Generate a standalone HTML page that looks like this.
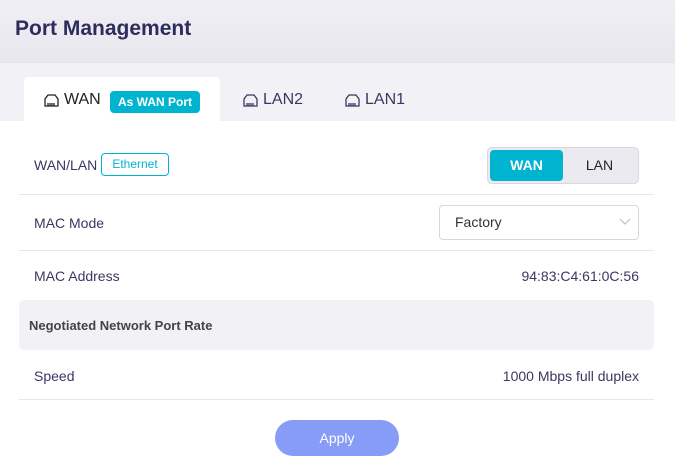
<!DOCTYPE html>
<html><head><meta charset="utf-8"><style>
*{margin:0;padding:0;box-sizing:border-box}
body{width:675px;height:468px;overflow:hidden;background:#fff;font-family:"Liberation Sans",sans-serif;position:relative;color:#3a3862}
.a{position:absolute}
.hdr{left:0;top:0;width:675px;height:62px;background:linear-gradient(#f0eff4,#e8e7ee)}
.title{left:15px;top:17px;font-size:21px;font-weight:bold;color:#2e2c5c}
.tabbar{left:0;top:62px;width:675px;height:59px;background:#f2f1f6;border-top:1px solid #e4e3ea}
.tab{top:77px;left:24px;width:196px;height:45px;background:#fff;border-radius:4px 4px 0 0}
.badge{left:110px;top:91px;width:90px;height:22px;background:#00b4d0;color:#fff;font-size:12px;font-weight:bold;border-radius:4px;text-align:center;line-height:22px}
.lbl{font-size:14px;color:#3a3862}
.line{left:19px;width:635px;height:1px;background:#e8e8ec}
.eth{left:101px;top:153px;width:68px;height:23px;border:1px solid #00b4d0;border-radius:4px;color:#00b4d0;font-size:12px;text-align:center;line-height:21px}
.seg{left:487px;top:147px;width:152px;height:37px;background:#ebeaf0;border:1px solid #d8d7de;border-radius:5px}
.segw{left:490px;top:150px;width:73px;height:31px;background:#00b4d0;border-radius:4px;color:#fff;font-weight:bold;font-size:14px;text-align:center;line-height:31px}
.sel{left:439px;top:205px;width:200px;height:35px;border:1px solid #d8d7de;border-radius:4px;font-size:14px;color:#333;padding:0 0 0 15px;line-height:33px}
.gray{left:19px;top:300px;width:635px;height:50px;background:#f2f1f6;border-radius:5px}
.btn{left:275px;top:420px;width:124px;height:36px;background:#869cf7;border-radius:18px;color:#fff;font-size:14px;text-align:center;line-height:36px}
</style></head><body>
<div class="a hdr"></div>
<div class="a title">Port Management</div>
<div class="a tabbar"></div>
<div class="a tab"></div>
<svg class="a" style="left:44px;top:94px" width="15" height="13" viewBox="0 0 15 13" fill="none" stroke="#222" stroke-width="1.3"><path d="M1 12V5L4 1h7l3 4v7z"/><path d="M4 12V9M6 12V9M8 12V9M10 12V9"/></svg>
<div class="a" style="left:64px;top:91px;font-size:16px;color:#222">WAN</div>
<div class="a badge">As WAN Port</div>
<svg class="a" style="left:243px;top:94px" width="15" height="13" viewBox="0 0 15 13" fill="none" stroke="#3a3862" stroke-width="1.3"><path d="M1 12V5L4 1h7l3 4v7z"/><path d="M4 12V9M6 12V9M8 12V9M10 12V9"/></svg>
<div class="a" style="left:263px;top:91px;font-size:16px;color:#3a3862">LAN2</div>
<svg class="a" style="left:345px;top:94px" width="15" height="13" viewBox="0 0 15 13" fill="none" stroke="#3a3862" stroke-width="1.3"><path d="M1 12V5L4 1h7l3 4v7z"/><path d="M4 12V9M6 12V9M8 12V9M10 12V9"/></svg>
<div class="a" style="left:365px;top:91px;font-size:16px;color:#3a3862">LAN1</div>

<div class="a lbl" style="left:34px;top:157px">WAN/LAN</div>
<div class="a eth">Ethernet</div>
<div class="a seg"></div>
<div class="a segw">WAN</div>
<div class="a" style="left:563px;top:157px;width:73px;text-align:center;font-size:14px;color:#222">LAN</div>
<div class="a line" style="top:194px"></div>
<div class="a lbl" style="left:34px;top:215px">MAC Mode</div>
<div class="a sel">Factory</div>
<svg class="a" style="left:619px;top:218px" width="12" height="8" viewBox="0 0 12 8" fill="none" stroke="#bbb" stroke-width="1"><path d="M1 1l5 5 5-5"/></svg>
<div class="a line" style="top:250px"></div>
<div class="a lbl" style="left:34px;top:268px">MAC Address</div>
<div class="a lbl" style="right:36px;top:268px">94:83:C4:61:0C:56</div>
<div class="a gray"></div>
<div class="a" style="left:29px;top:318px;font-size:13px;font-weight:bold;color:#444">Negotiated Network Port Rate</div>
<div class="a lbl" style="left:34px;top:368px">Speed</div>
<div class="a lbl" style="right:36px;top:368px">1000 Mbps full duplex</div>
<div class="a line" style="top:399px"></div>
<div class="a btn">Apply</div>
</body></html>
